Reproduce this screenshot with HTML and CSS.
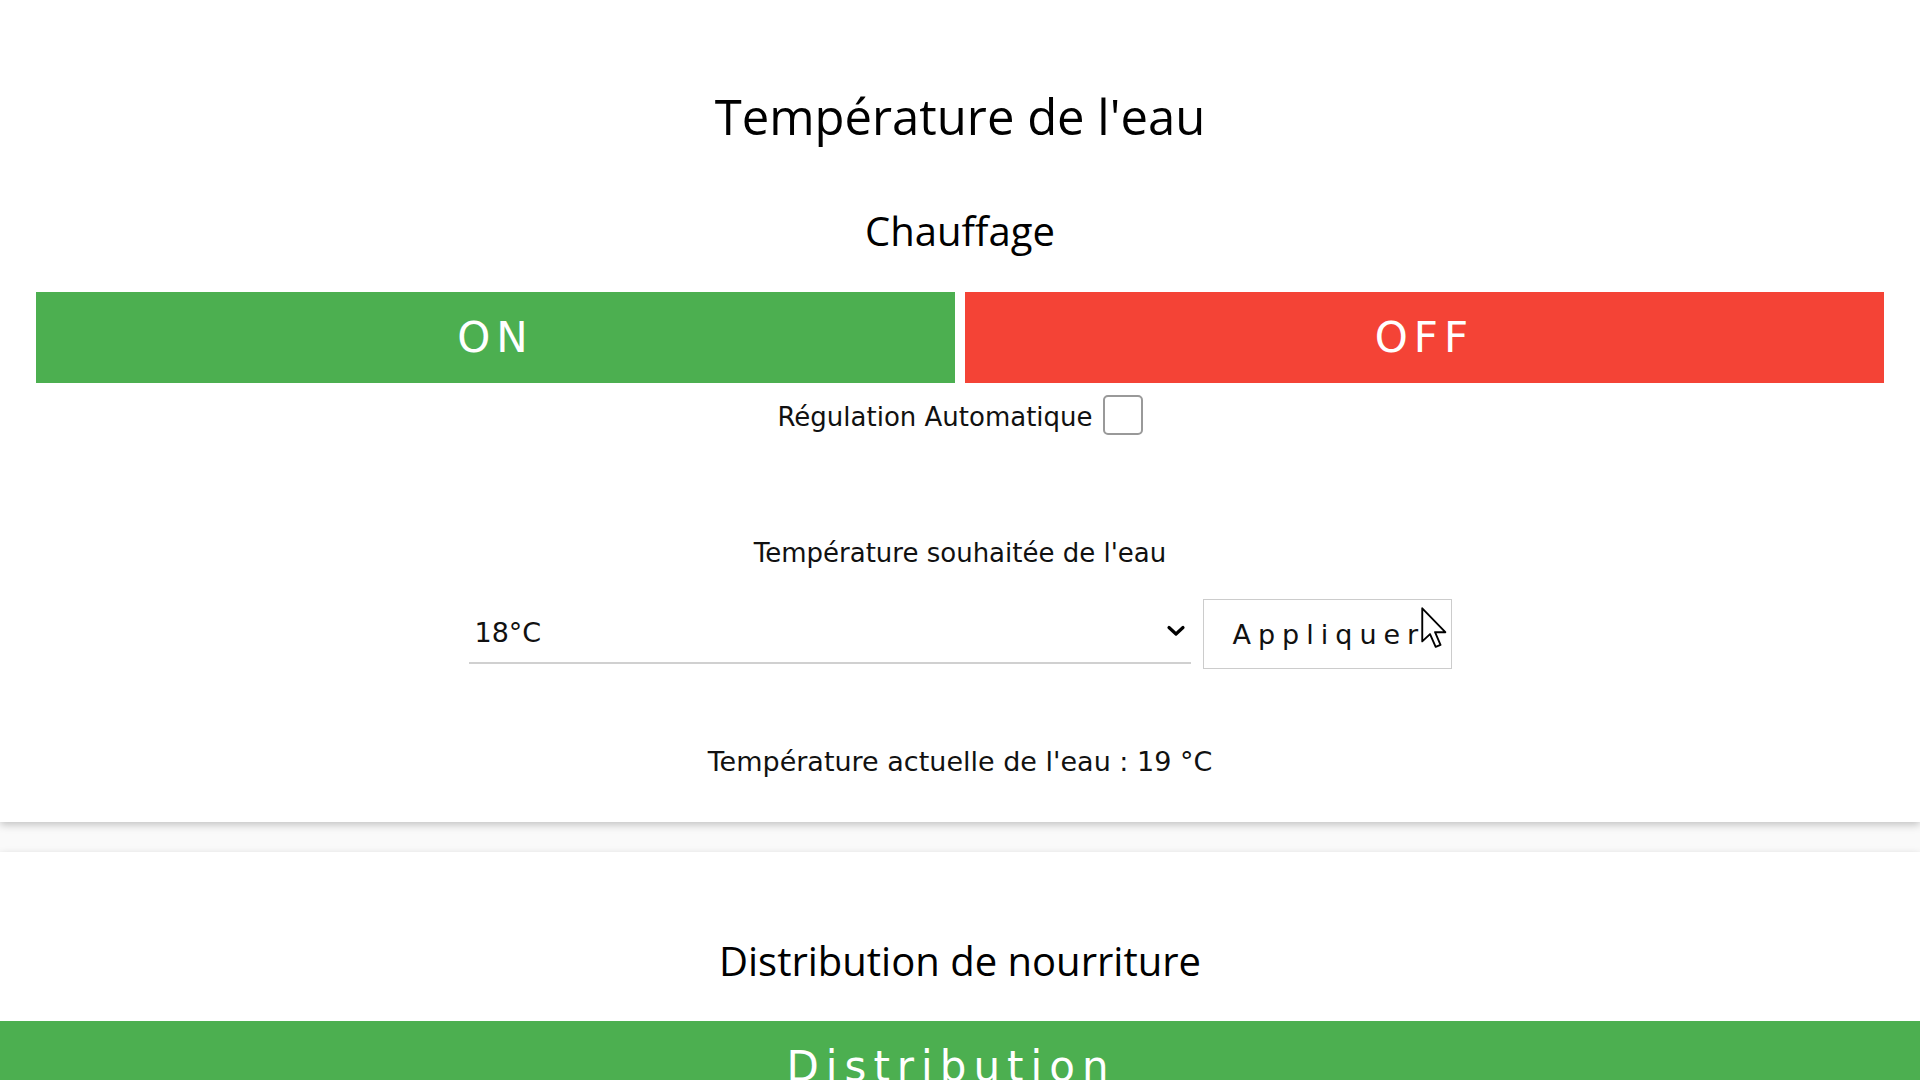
FILE: index.html
```html
<!DOCTYPE html>
<html lang="fr">
<head>
<meta charset="utf-8">
<title>Aquarium</title>
<link rel="stylesheet" href="styles.css">
</head>
<body>
<section class="card card-water">
  <h1 class="title">Température de l'eau</h1>
  <h2 class="subtitle">Chauffage</h2>
  <div class="toggle-row">
    <button class="btn btn-on">ON</button>
    <button class="btn btn-off">OFF</button>
  </div>
  <label class="auto-row">
    <span class="auto-label">Régulation Automatique</span>
    <input type="checkbox" class="auto-check">
  </label>
  <p class="field-label">Température souhaitée de l'eau</p>
  <div class="set-row">
    <div class="select-wrap">
      <select class="temp-select"><option>18°C</option></select>
      <svg class="chevron" width="20" height="12" viewBox="0 0 20 12"><path d="M3 2.5 L10 9 L17 2.5" fill="none" stroke="#000" stroke-width="3.2" stroke-linecap="round" stroke-linejoin="round"/></svg>
    </div>
    <div class="apply-wrap">
      <button class="apply-btn">Appliquer</button>
      <svg class="cursor" width="26" height="42" viewBox="0 0 12.4 20"><path d="M0.6 0.6 L0.6 16.4 L4.3 12.9 L7 19 L9.3 18 L6.7 12 L11.6 12 Z" fill="#fff" stroke="#000" stroke-width="0.9" stroke-linejoin="round"/></svg>
    </div>
  </div>
  <p class="current">Température actuelle de l'eau : 19 °C</p>
</section>
<section class="card card-food">
  <h2 class="food-title">Distribution de nourriture</h2>
  <button class="btn btn-distribute">Distribution</button>
</section>
</body>
</html>
```
FILE: styles.css
```css
html, body {
  margin: 0;
  padding: 0;
}

body {
  background: #fafafa;
  font-family: "DejaVu Sans", Verdana, sans-serif;
  color: #111;
  overflow: hidden;
}

.card {
  background: #fff;
  box-shadow: 0 3px 8px rgba(0, 0, 0, 0.22);
  display: flex;
  flex-direction: column;
  align-items: center;
}

.card-water {
  padding: 86px 0 45px;
  margin-bottom: 30px;
}

.card-food {
  padding-top: 81px;
}

.title {
  margin: 0;
  font-family: "Open Sans", "Noto Sans", sans-serif;
  font-weight: 400;
  font-size: 49px;
  line-height: 60px;
  color: #000;
}

.subtitle {
  margin: 60px 0 0;
  font-family: "Open Sans", "Noto Sans", sans-serif;
  font-weight: 400;
  font-size: 40px;
  line-height: 50px;
  color: #000;
}

.toggle-row {
  align-self: stretch;
  display: flex;
  gap: 10px;
  padding: 0 36px;
  margin-top: 36px;
}

.btn {
  border: none;
  color: #fff;
  font-family: "DejaVu Sans", Verdana, sans-serif;
  font-size: 42px;
  letter-spacing: 6px;
  height: 91px;
  padding: 0;
  cursor: pointer;
}

.btn-on,
.btn-off {
  flex: 1;
}

.btn-on {
  background: #4caf50;
}

.btn-off {
  background: #f44336;
}

.auto-row {
  display: flex;
  align-items: center;
  gap: 10px;
  margin-top: 12px;
  height: 40px;
}

.auto-label {
  font-size: 26px;
  padding-top: 4px;
}

.auto-check {
  appearance: none;
  -webkit-appearance: none;
  width: 40px;
  height: 40px;
  margin: 0;
  border: 2px solid #999;
  border-radius: 5px;
  background: #fff;
  box-sizing: border-box;
}

.field-label {
  margin: 103px 0 0;
  font-size: 26px;
  line-height: 30px;
}

.set-row {
  display: flex;
  align-items: flex-start;
  gap: 12px;
  margin-top: 31px;
}

.select-wrap {
  width: 722px;
  height: 65px;
  box-sizing: border-box;
  border-bottom: 2px solid #d0d0d0;
  display: flex;
  align-items: center;
}

.temp-select {
  appearance: none;
  -webkit-appearance: none;
  flex: 1;
  height: 100%;
  border: none;
  background: transparent;
  font-family: "DejaVu Sans", Verdana, sans-serif;
  font-size: 27px;
  color: #111;
  padding: 4px 0 0 6px;
  outline: none;
}

.chevron {
  margin-right: 5px;
  flex: none;
}

.apply-wrap {
  position: relative;
}

.apply-btn {
  width: 249px;
  height: 70px;
  box-sizing: border-box;
  border: 1px solid #ccc;
  background: #fff;
  font-family: "DejaVu Sans", Verdana, sans-serif;
  font-size: 27px;
  letter-spacing: 7px;
  color: #111;
  padding: 0 22px 0 29px;
  text-align: left;
}

.cursor {
  position: absolute;
  left: 218px;
  top: 8px;
}

.current {
  margin: 77px 0 0;
  font-size: 27px;
  line-height: 31px;
}

.food-title {
  margin: 0;
  font-family: "Open Sans", "Noto Sans", sans-serif;
  font-weight: 400;
  font-size: 40px;
  line-height: 56px;
  color: #000;
}

.btn-distribute {
  align-self: stretch;
  margin-top: 32px;
  background: #4caf50;
  font-size: 42px;
  letter-spacing: 7px;
  padding-right: 18px;
}
```
